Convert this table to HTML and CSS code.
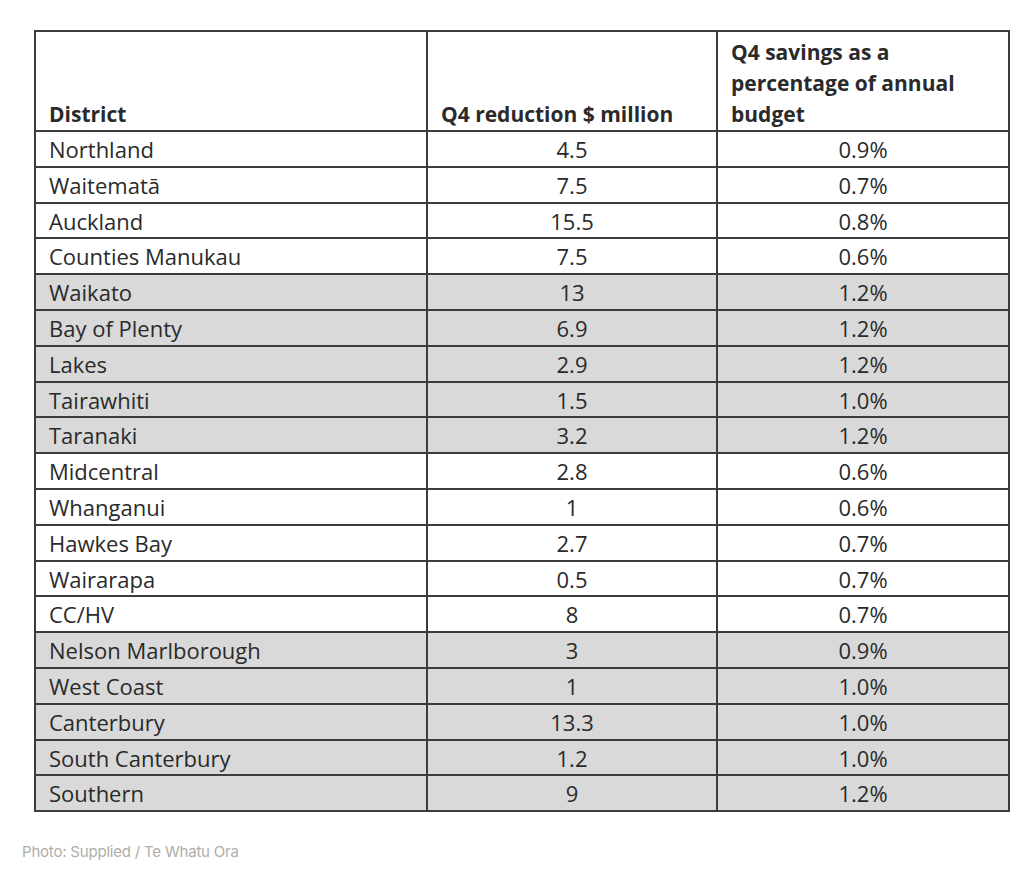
FILE: index.html
```html
<!DOCTYPE html>
<html lang="en">
<head>
<meta charset="utf-8">
<title>Q4 savings by district</title>
<link rel="stylesheet" href="styles.css">
</head>
<body>
<figure class="figure">
  <div class="table-wrap">
    <table class="data">
      <colgroup>
        <col class="c1">
        <col class="c2">
        <col class="c3">
      </colgroup>
      <thead>
        <tr class="head">
          <th>District</th>
          <th>Q4 reduction $ million</th>
          <th>Q4 savings as a<br>percentage of annual<br>budget</th>
        </tr>
      </thead>
      <tbody>
        <tr><td>Northland</td><td>4.5</td><td>0.9%</td></tr>
        <tr><td>Waitematā</td><td>7.5</td><td>0.7%</td></tr>
        <tr><td>Auckland</td><td>15.5</td><td>0.8%</td></tr>
        <tr><td>Counties Manukau</td><td>7.5</td><td>0.6%</td></tr>
        <tr class="shade"><td>Waikato</td><td>13</td><td>1.2%</td></tr>
        <tr class="shade"><td>Bay of Plenty</td><td>6.9</td><td>1.2%</td></tr>
        <tr class="shade"><td>Lakes</td><td>2.9</td><td>1.2%</td></tr>
        <tr class="shade"><td>Tairawhiti</td><td>1.5</td><td>1.0%</td></tr>
        <tr class="shade"><td>Taranaki</td><td>3.2</td><td>1.2%</td></tr>
        <tr><td>Midcentral</td><td>2.8</td><td>0.6%</td></tr>
        <tr><td>Whanganui</td><td>1</td><td>0.6%</td></tr>
        <tr><td>Hawkes Bay</td><td>2.7</td><td>0.7%</td></tr>
        <tr><td>Wairarapa</td><td>0.5</td><td>0.7%</td></tr>
        <tr><td>CC/HV</td><td>8</td><td>0.7%</td></tr>
        <tr class="shade"><td>Nelson Marlborough</td><td>3</td><td>0.9%</td></tr>
        <tr class="shade"><td>West Coast</td><td>1</td><td>1.0%</td></tr>
        <tr class="shade"><td>Canterbury</td><td>13.3</td><td>1.0%</td></tr>
        <tr class="shade"><td>South Canterbury</td><td>1.2</td><td>1.0%</td></tr>
        <tr class="shade"><td>Southern</td><td>9</td><td>1.2%</td></tr>
      </tbody>
    </table>
  </div>
  <figcaption class="caption">Photo: Supplied / Te Whatu Ora</figcaption>
</figure>
</body>
</html>
```

FILE: styles.css
```css
html, body {
  margin: 0;
  padding: 0;
  background: #ffffff;
}

.figure {
  margin: 0;
  padding: 30px 0 0 22px;
}

.table-wrap {
  padding-left: 12px;
}

.data {
  border-collapse: collapse;
  table-layout: fixed;
  width: 974px;
  font-family: "Open Sans", Lato, sans-serif;
  font-size: 22px;
  font-variant-ligatures: none;
  color: #2a2a2a;
}

.c1 { width: 392px; }
.c2 { width: 290px; }
.c3 { width: 292px; }

.data th,
.data td {
  border: 2px solid #3c3c3c;
  padding: 0 13px;
}

.data th {
  font-size: 21px;
  font-weight: 700;
  text-align: left;
  vertical-align: bottom;
  line-height: 31px;
  padding-bottom: 0;
  height: 98px;
}

.data td {
  height: 31.8px;
  line-height: 31.8px;
  padding-top: 2px;
  padding-bottom: 0;
}

.data td:nth-child(2),
.data td:nth-child(3) {
  text-align: center;
}

.data tr.shade td {
  background: #d9d9d9;
}

.caption {
  margin: 30px 0 0 0;
  font-family: Inter, Roboto, sans-serif;
  font-size: 15px;
  color: #aeaea8;
  letter-spacing: -0.2px;
}
```
